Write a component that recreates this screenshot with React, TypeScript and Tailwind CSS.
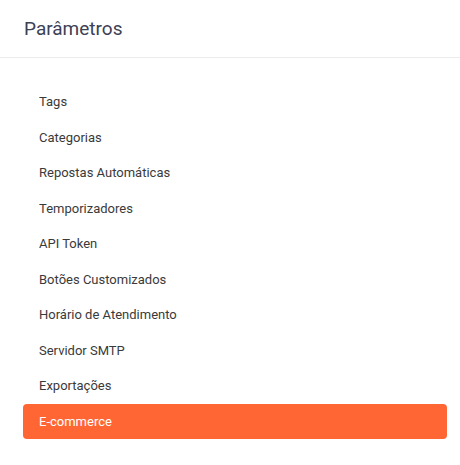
import React from "react";

const items = [
  "Tags",
  "Categorias",
  "Repostas Automáticas",
  "Temporizadores",
  "API Token",
  "Botões Customizados",
  "Horário de Atendimento",
  "Servidor SMTP",
  "Exportações",
  "E-commerce",
];

export default function App() {
  return (
    <div
      className="w-[460px] h-[465px] bg-white"
      style={{ fontFamily: "Roboto, 'Liberation Sans', sans-serif" }}
    >
      <div className="h-[58px] flex items-center pl-[24px] pr-[23px] border-b border-[#ebebeb]">
        <h1 className="text-[19px] font-normal text-[#3c4155] leading-none">Parâmetros</h1>
      </div>
      <ul className="pt-[26px] pl-[23px] pr-[13px] flex flex-col">
        {items.map((it) => {
          const active = it === "E-commerce";
          return (
            <li
              key={it}
              className={
                "h-[35.5px] flex items-center pl-[16px] text-[13px] rounded-[4px] " +
                (active ? "bg-[#ff6633] text-white" : "text-[#3a3a3a]")
              }
            >
              {it}
            </li>
          );
        })}
      </ul>
    </div>
  );
}
